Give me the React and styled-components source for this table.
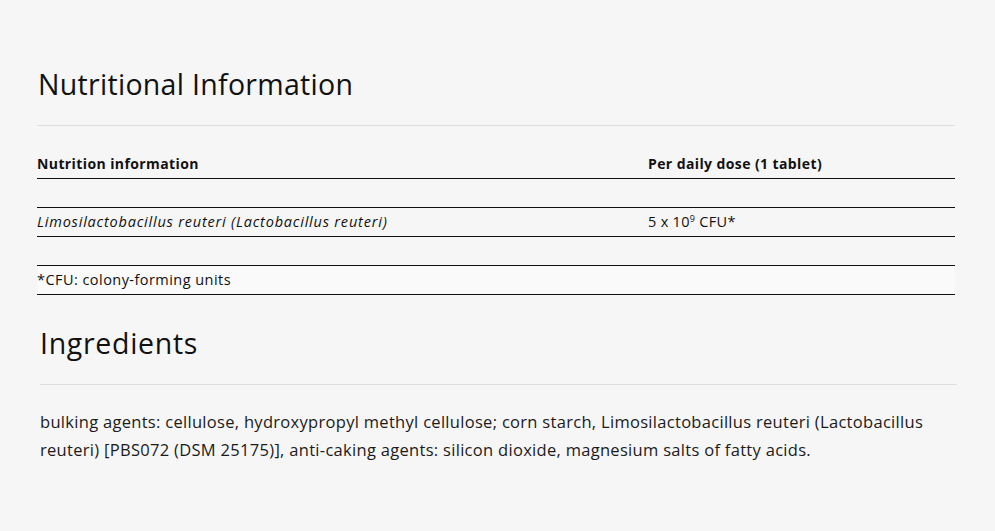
import React from "react";
import styled, { createGlobalStyle } from "styled-components";

const GlobalStyle = createGlobalStyle`
  html, body {
    margin: 0;
    padding: 0;
    background: #f6f6f6;
  }
  body {
    font-family: "Open Sans", "Liberation Sans", sans-serif;
    color: #1b1b1b;
  }
`;

const Page = styled.div`
  width: 995px;
  min-height: 531px;
  box-sizing: border-box;
  padding: 67px 0 40px;
  background: #f6f6f6;
`;

const Section = styled.section`
  margin: ${(p) => p.$top || 0}px 0 0 ${(p) => p.$left}px;
  width: ${(p) => p.$width}px;
`;

const Heading = styled.h2`
  margin: 0;
  padding: 0 0 24px ${(p) => p.$indent || 0}px;
  font-size: 28.5px;
  line-height: 34px;
  letter-spacing: ${(p) => p.$spacing || 0.3}px;
  font-weight: 400;
  color: #111;
  border-bottom: 1px solid #dedede;
`;

const Table = styled.div`
  margin-top: 24px;
`;

const Row = styled.div`
  display: grid;
  grid-template-columns: 611px 1fr;
  height: 28px;
  align-items: center;
  border-bottom: 1px solid #111;
  background: ${(p) => (p.$light ? "#fafafa" : "transparent")};
  font-size: ${(p) => (p.$head ? "14px" : "14.5px")};
  letter-spacing: ${(p) => (p.$head ? "0.4px" : "0.3px")};
  font-weight: ${(p) => (p.$head ? 700 : 400)};
  color: #111;
`;

const Cell = styled.div`
  font-style: ${(p) => (p.$italic ? "italic" : "inherit")};
  letter-spacing: ${(p) => (p.$italic ? "0.8px" : p.$wide ? "0.45px" : "inherit")};
  white-space: nowrap;
  padding-bottom: 2px;
`;

const Sup = styled.sup`
  font-size: 9px;
  vertical-align: 5px;
  line-height: 0;
`;

const Text = styled.p`
  margin: 23px 0 0;
  font-size: 16.5px;
  letter-spacing: 0.3px;
  line-height: 28px;
  color: #1b1b1b;
`;

export default function App() {
  return (
    <>
      <GlobalStyle />
      <Page>
        <Section $left={37} $width={918}>
          <Heading $indent={1}>Nutritional Information</Heading>
          <Table>
            <Row $head>
              <Cell>Nutrition information</Cell>
              <Cell>Per daily dose (1 tablet)</Cell>
            </Row>
            <Row />
            <Row>
              <Cell $italic>Limosilactobacillus reuteri (Lactobacillus reuteri)</Cell>
              <Cell>
                5 x 10<Sup>9</Sup> CFU*
              </Cell>
            </Row>
            <Row />
            <Row $light>
              <Cell $wide>*CFU: colony-forming units</Cell>
              <Cell />
            </Row>
          </Table>
        </Section>
        <Section $left={40} $width={917} $top={31}>
          <Heading $spacing={0.7}>Ingredients</Heading>
          <Text>
            bulking agents: cellulose, hydroxypropyl methyl cellulose; corn starch, Limosilactobacillus reuteri
            (Lactobacillus reuteri) [PBS072 (DSM 25175)], anti-caking agents: silicon dioxide, magnesium salts of
            fatty acids.
          </Text>
        </Section>
      </Page>
    </>
  );
}
